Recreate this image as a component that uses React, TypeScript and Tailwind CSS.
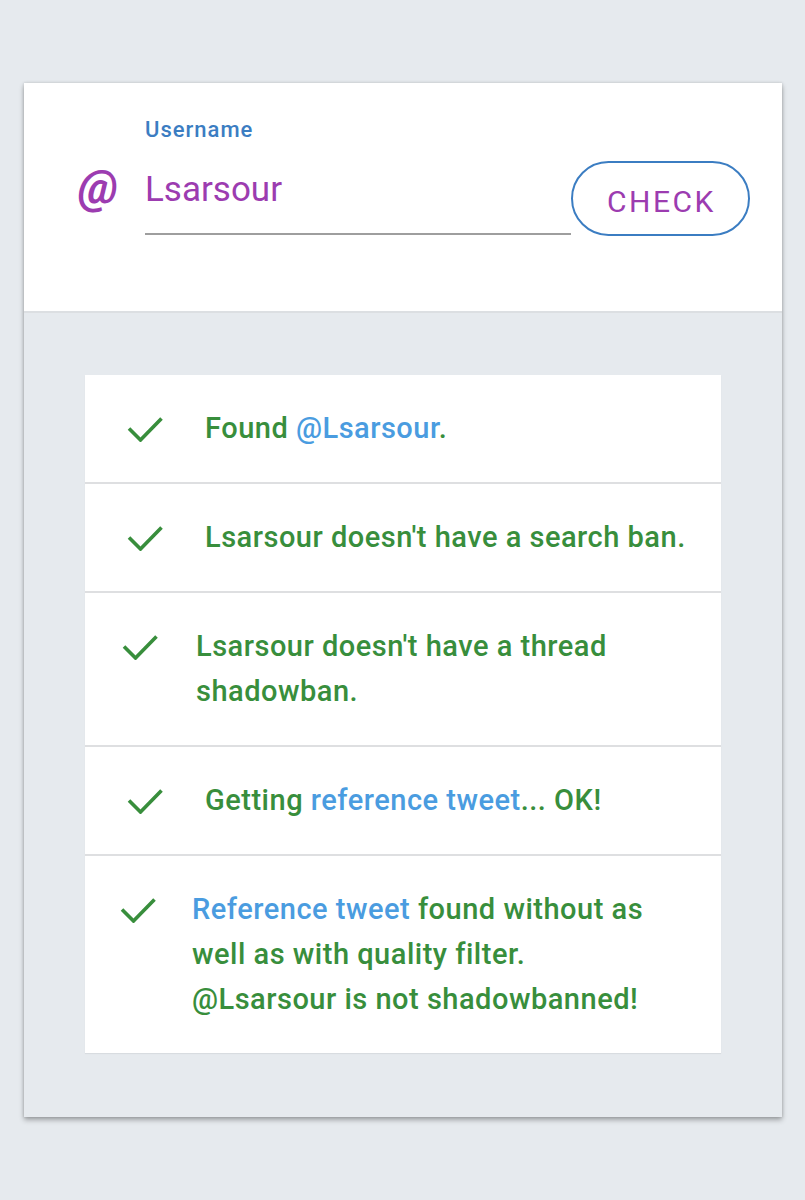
import React from "react";

const GREEN = "text-[#388e3c]";

function Check() {
  return (
    <div className="h-[45px] w-[36px] flex items-center shrink-0">
      <svg width="36" height="26" viewBox="0 0 36 26" fill="none">
        <polyline points="2,12.5 13.5,24 34.5,2.5" stroke="#388e3c" strokeWidth="3.6" strokeLinecap="butt" strokeLinejoin="miter" />
      </svg>
    </div>
  );
}

function Row({ pl, pr = "pr-[22px]", gap, children, last }: { pl: string; pr?: string; gap: string; children: React.ReactNode; last?: boolean }) {
  return (
    <div className={`flex items-start py-[31px] ${pr} ${pl} ${last ? "" : "border-b-2 border-[#dedfe1]"}`}>
      <Check />
      <div className={`${gap} text-[29px] leading-[45px] tracking-[0.5px] font-medium ${GREEN}`}>{children}</div>
    </div>
  );
}

const Link = ({ children }: { children: React.ReactNode }) => (
  <span className="text-[#4a9ce0]">{children}</span>
);

export default function App() {
  return (
    <div className="min-h-[1200px] bg-[#e6eaee] pt-[83px] pb-[84px]" style={{ fontFamily: "Roboto, 'Noto Sans', sans-serif" }}>
      <div className="ml-[24px] w-[758px] bg-[#e6eaee] shadow-[0_3px_5px_rgba(0,0,0,0.3),0_0_3px_rgba(0,0,0,0.15)]">
        <div className="bg-white border-b-2 border-[#dcdfe2] h-[230px] pt-[34px] pl-[54px] pr-[32px]">
          <div className="flex items-end">
            <div className="w-[67px] self-start mt-[45px] text-[46px] leading-[50px] font-bold italic text-[#9c3cb0]">@</div>
            <div className="w-[426px]">
              <div className="text-[22px] leading-[26px] tracking-[1px] font-medium text-[#3b7dc2]">Username</div>
              <div className="mt-[27px] text-[35px] leading-[40px] text-[#9c3cb0]">Lsarsour</div>
              <div className="mt-[23px] h-[2px] bg-[#9e9e9e]"></div>
            </div>
            <button className="mb-[-1px] w-[179px] h-[75px] pt-[6px] pl-[2px] rounded-full border-2 border-[#3b7dc2] text-[30px] tracking-[2.5px] text-[#9c3cb0] bg-white">
              CHECK
            </button>
          </div>
        </div>
        <div className="px-[61px] pt-[62px] pb-[64px]">
          <div className="bg-white shadow-[0_1px_1px_rgba(0,0,0,0.06)]">
            <Row pl="pl-[42px]" gap="ml-[42px]">
              Found <Link>@Lsarsour</Link>.
            </Row>
            <Row pl="pl-[42px]" gap="ml-[42px]">
              Lsarsour doesn't have a search ban.
            </Row>
            <Row pl="pl-[37px]" gap="ml-[38px]">
              Lsarsour doesn't have a thread shadowban.
            </Row>
            <Row pl="pl-[42px]" gap="ml-[42px]">
              Getting <Link>reference tweet</Link>... OK!
            </Row>
            <Row pl="pl-[35px]" pr="pr-[62px]" gap="ml-[36px]" last>
              <Link>Reference tweet</Link> found without as well as with quality filter. @Lsarsour is not shadowbanned!
            </Row>
          </div>
        </div>
      </div>
    </div>
  );
}
